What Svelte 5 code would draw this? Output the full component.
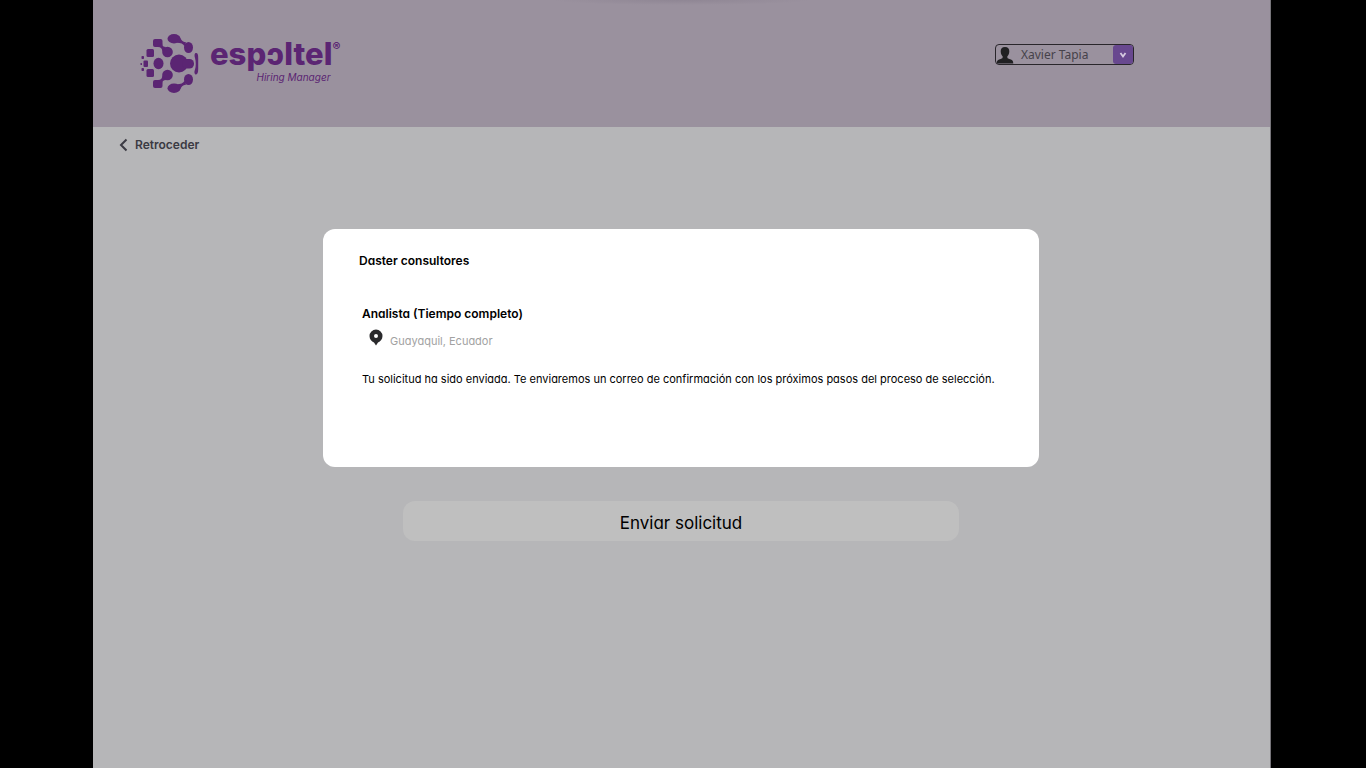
<script>
  const job = {
    company: 'Daster consultores',
    title: 'Analista (Tiempo completo)',
    place: 'Guayaquil, Ecuador',
    message:
      'Tu solicitud ha sido enviada. Te enviaremos un correo de confirmación con los próximos pasos del proceso de selección.'
  };
</script>

<div class="page">
  <header>
    <div class="brand">
      <svg class="mark" viewBox="0 0 60 60" aria-hidden="true">
        <g fill="currentColor">
          <rect x="13" y="5" width="9.500" height="8" rx="2" />
          <rect x="6.500" y="15" width="7.500" height="8" rx="1.500" />
          <rect x="3.500" y="26.500" width="4.500" height="6.500" rx="1" />
          <rect x="6.500" y="35" width="7.500" height="8" rx="1.500" />
          <rect x="13" y="46" width="9.500" height="8" rx="2" />
          <rect x="1.500" y="22" width="2.500" height="3" rx=".8" />
          <rect x="1.500" y="34" width="2.500" height="3" rx=".8" />
          <rect x=".5" y="29" width="1.500" height="2" rx=".5" />
          <circle cx="27.500" cy="18" r="5.300" />
          <circle cx="27.500" cy="41" r="5.300" />
          <path d="M18 13c3 0 4 1.500 4.500 4.500l3.500-4.500c-2.500 0-4-1-4-4zM18 46c3 0 4-1.500 4.500-4.500L26 46c-2.500 0-4 1-4 4z" />
          <ellipse cx="18.500" cy="29.500" rx="5" ry="5.700" />
          <circle cx="39" cy="29.500" r="9" />
          <rect x="42" y="25" width="12" height="9.500" rx="4.500" />
          <ellipse cx="34" cy="4.700" rx="6.500" ry="4.700" />
          <ellipse cx="48.500" cy="13.500" rx="4.500" ry="5.500" />
          <path d="M39 2c1.500 2 2.500 6 7 6.300l-1.500 4c-1-2.500-4-3.500-7.500-3.500z" />
          <ellipse cx="34" cy="54.300" rx="6.500" ry="4.700" />
          <ellipse cx="48.500" cy="45.500" rx="4.500" ry="5.500" />
          <path d="M39 57c1.500-2 2.500-6 7-6.300l-1.500-4c-1 2.500-4 3.500-7.500 3.500z" />
          <path d="M56 19c2 0 2.200 2 2.200 5v11c0 3-.7 5.500-2.200 5.500-1.600 0-2-2.500-1-5 1-3 1-8 0-11.500-.7-2.500-.6-5 1-5z" />
        </g>
      </svg>
      <div class="words">
        <span class="name">espɔltel<sup>®</sup></span>
        <span class="tag">Hiring Manager</span>
      </div>
    </div>
    <button class="user" type="button">
      <svg class="avatar" viewBox="0 0 18 18" aria-hidden="true">
        <path d="M9 1c3 0 4.500 2 4.300 4.500-.1 2.500-1 3.500-2 5 0 1.500.3 2 2 2.500 2.500.6 4 1.500 4 4.500H.7c0-3 1.500-3.900 4-4.500 1.700-.5 2-1 2-2.500-1-1.500-1.900-2.500-2-5C4.500 3 6 1 9 1z" fill="#202022" />
      </svg>
      <span class="username">Xavier Tapia</span>
      <span class="toggle">
        <svg viewBox="0 0 8 8" aria-hidden="true"><path d="M1.500 2L4 5.500 6.500 2" fill="none" stroke="#d5cae0" stroke-width="1.800" /></svg>
      </span>
    </button>
  </header>

  <main>
    <a class="back" href="#back">
      <svg viewBox="0 0 9 14" aria-hidden="true"><path d="M7.500 1.500L2 7l5.500 5.500" fill="none" stroke="currentColor" stroke-width="2" /></svg>
      Retroceder
    </a>

    <div class="column">
      <section class="card" role="dialog" aria-labelledby="company">
        <h1 id="company">{job.company}</h1>
        <div class="details">
          <h2>{job.title}</h2>
          <p class="place">
            <svg viewBox="0 0 14 17" aria-hidden="true">
              <path fill-rule="evenodd" d="M7 .5a6.500 6.500 0 0 1 6.500 6.500c0 3-2 5.500-4.500 6.500L7 16.500 5 13.500C2.500 12.500.5 10 .5 7A6.500 6.500 0 0 1 7 .5zM7 5a2 2 0 1 0 0 4 2 2 0 0 0 0-4z" fill="#2a2a2c" />
            </svg>
            <span>{job.place}</span>
          </p>
          <p class="message">{job.message}</p>
        </div>
      </section>
      <button class="send" type="button">Enviar solicitud</button>
    </div>
  </main>
</div>

<style>
  :global(body) {
    margin: 0;
    background: #000;
  }
  .page {
    box-sizing: border-box;
    min-height: 100vh;
    margin: 0 95px 0 93px;
    border-right: 1px solid #77757a;
    background: #b6b6b8;
    color: #000;
    font-family: Inter, 'Liberation Sans', sans-serif;
    font-feature-settings: 'cv11';
  }
  header {
    display: flex;
    justify-content: space-between;
    align-items: flex-start;
    box-sizing: border-box;
    height: 127px;
    padding: 34px 136px 0 47px;
    background: radial-gradient(ellipse 130px 5px at 50% 0, #8f8694, transparent) #9a919e;
  }
  .brand {
    display: flex;
    gap: 10px;
    color: #5b2573;
  }
  .mark {
    width: 60px;
    height: 60px;
  }
  .words {
    display: flex;
    flex-direction: column;
    padding-top: 3px;
  }
  .name {
    font-size: 31px;
    line-height: 34px;
    font-weight: 800;
  }
  .name sup {
    font-size: 12px;
    line-height: 0;
    vertical-align: 14px;
  }
  .tag {
    align-self: flex-end;
    margin-right: 10px;
    font-size: 10px;
    line-height: 12px;
    font-style: italic;
  }
  .user {
    display: flex;
    align-items: center;
    box-sizing: border-box;
    width: 139px;
    height: 21px;
    margin-top: 10px;
    padding: 0;
    border: 1px solid #29262b;
    border-radius: 4px;
    background: transparent;
    color: #46424a;
    font: 12px 'Noto Sans', sans-serif;
  }
  .avatar {
    width: 18px;
    height: 18px;
  }
  .username {
    flex: 1;
    padding-left: 7px;
    text-align: left;
  }
  .toggle {
    display: grid;
    place-items: center;
    width: 20px;
    height: 19px;
    border-radius: 3px;
    background: #68488f;
  }
  .toggle svg {
    width: 8px;
    height: 8px;
  }
  .back {
    display: flex;
    align-items: center;
    gap: 7px;
    width: fit-content;
    padding: 10px 0 0 26px;
    color: #3b3a43;
    font-size: 12px;
    line-height: 16px;
    font-weight: 600;
    text-decoration: none;
  }
  .back svg {
    width: 9px;
    height: 14px;
  }
  .column {
    display: flex;
    flex-direction: column;
    align-items: center;
    padding: 76px 19px 0 18px;
  }
  .card {
    box-sizing: border-box;
    width: 100%;
    max-width: 716px;
    min-height: 238px;
    padding: 24px 36px;
    border-radius: 12px;
    background: #fff;
  }
  h1,
  h2 {
    margin: 0;
    font-size: 12px;
    line-height: 16px;
    font-weight: 600;
  }
  .details {
    padding: 37px 0 0 3px;
  }
  p {
    margin: 0;
    font-size: 11px;
    line-height: 16px;
  }
  .place {
    display: flex;
    gap: 7px;
    padding: 7px 0 0 7px;
    color: #a2a2a2;
  }
  .place svg {
    width: 14px;
    height: 17px;
  }
  .place span {
    padding-top: 4px;
  }
  .message {
    margin-top: 22px;
  }
  .send {
    width: 100%;
    max-width: 556px;
    height: 40px;
    margin-top: 34px;
    padding: 3px 0 0;
    border: 0;
    border-radius: 12px;
    background: #bfbfbf;
    color: #000;
    font-family: inherit;
    font-feature-settings: inherit;
    font-size: 17px;
  }
</style>
